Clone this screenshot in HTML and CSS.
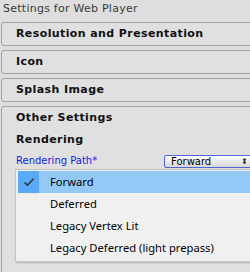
FILE: index.html
```html
<!DOCTYPE html>
<html>
<head>
<meta charset="utf-8">
<link rel="stylesheet" href="styles.css">
</head>
<body>
<div class="inspector">
  <div class="title">Settings for Web Player</div>
  <div class="section"><span>Resolution and Presentation</span></div>
  <div class="section"><span>Icon</span></div>
  <div class="section"><span>Splash Image</span></div>
  <div class="section open">
    <div class="sec-title">Other Settings</div>
    <div class="sub">Rendering</div>
    <div class="field">
      <span class="label">Rendering Path*</span>
      <div class="popup"><span>Forward</span><span class="arrows">&#x2B0D;</span></div>
    </div>
  </div>
  <div class="menu">
    <div class="item sel"><span class="gut"><svg width="12" height="10" viewBox="0 0 12 10"><path d="M1.5 5.5 L4.5 8.2 L10.5 1.8" fill="none" stroke="#2c3440" stroke-width="1.6"/></svg></span><span class="txt">Forward</span></div>
    <div class="item"><span class="gut"></span><span class="txt">Deferred</span></div>
    <div class="item"><span class="gut"></span><span class="txt">Legacy Vertex Lit</span></div>
    <div class="item"><span class="gut"></span><span class="txt">Legacy Deferred (light prepass)</span></div>
  </div>
</div>
</body>
</html>
```

FILE: styles.css
```css
html, body {
  margin: 0;
  padding: 0;
  background: #dedede;
  overflow: hidden;
}
.inspector {
  position: relative;
  width: 250px;
  height: 272px;
  overflow: hidden;
  font-family: "DejaVu Sans", Verdana, sans-serif;
}
.title {
  height: 22px;
  padding-left: 3px;
  font-size: 11px;
  letter-spacing: 0.25px;
  line-height: 18px;
  color: #3a3a3a;
}
.section {
  margin-left: 1px;
  margin-right: -10px;
  height: 22px;
  border: 1px solid #a2a2a2;
  border-radius: 3px;
  background: #e0e0e0;
  margin-bottom: 4px;
  font-weight: bold;
  font-size: 11px;
  letter-spacing: 0.4px;
  color: #111;
}
.section > span {
  display: block;
  padding-left: 14px;
  line-height: 22px;
}
.section.open {
  height: 180px;
}
.sec-title {
  padding-left: 14px;
  padding-top: 3px;
  line-height: 16px;
}
.sub {
  padding-left: 14px;
  padding-top: 6px;
  line-height: 16px;
}
.field {
  display: flex;
  align-items: center;
  padding-left: 14px;
  margin-top: 6px;
  height: 14px;
  font-weight: normal;
  font-size: 10px;
  letter-spacing: 0;
}
.label {
  color: #0f22e0;
  width: 148px;
  line-height: 12px;
}
.popup {
  flex: 1;
  height: 11px;
  border: 1px solid #5264d8;
  border-radius: 2px;
  background: linear-gradient(#ffffff, #d6d6d6);
  display: flex;
  align-items: center;
  justify-content: space-between;
  padding: 0 10px 0 6px;
  font-size: 10px;
  color: #000;
}
.arrows {
  font-size: 8px;
  color: #333;
}
.menu {
  position: absolute;
  left: 15px;
  top: 169px;
  width: 250px;
  border: 1px solid #c4c4c4;
  background: #f0f0f0;
  padding: 1px 0 2px 2px;
  font-family: "Noto Sans", "Open Sans", sans-serif;
  font-size: 11.2px;
  color: #000;
  box-shadow: 1px 1px 2px rgba(0,0,0,0.2);
}
.item {
  display: flex;
  height: 22px;
  align-items: center;
}
.gut {
  width: 21px;
  height: 22px;
  display: flex;
  align-items: center;
  justify-content: center;
  background: #f0f0f0;
}
.txt {
  flex: 1;
  height: 22px;
  line-height: 22px;
  padding-left: 11px;
}
.item.sel .gut { background: #5aaaf7; }
.item.sel .txt { background: #94c9f7; }
```
